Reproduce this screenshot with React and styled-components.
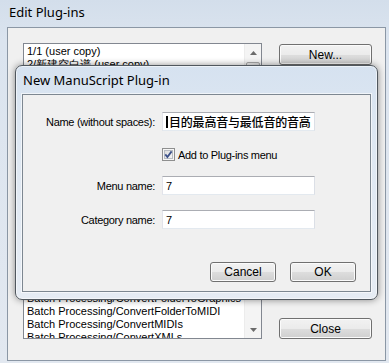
import React from "react";
import styled, { createGlobalStyle } from "styled-components";

const GlobalStyle = createGlobalStyle`
  html, body { margin: 0; padding: 0; }
  body {
    width: 389px;
    height: 363px;
    overflow: hidden;
    background: #dfe7f0;
    font-family: "Liberation Sans", Arial, sans-serif;
  }
`;

const Window = styled.div`
  position: relative;
  width: 389px;
  height: 363px;
  display: flex;
  flex-direction: column;
  background: linear-gradient(180deg, #d3deeb 0px, #dbe4ef 40px, #e2e8f0 100%);
  overflow: hidden;
`;

const TitleBar = styled.div`
  height: 27px;
  box-sizing: border-box;
  display: flex;
  align-items: center;
  padding: 0 0 3px 9px;
  font-family: "Noto Sans", "Open Sans", sans-serif;
  font-size: 13px;
  color: #000;
`;

const Client = styled.div`
  flex: 1;
  margin: 0 3px 2px 7px;
  background: #f0f0f0;
  border: 1px solid #8b97a5;
  padding: 15px 13px 0 15px;
  display: grid;
  grid-template-columns: 239px 93px;
  column-gap: 17px;
  align-content: start;
`;

const ListBox = styled.div`
  height: 296px;
  box-sizing: border-box;
  border: 1px solid #828790;
  background: #fff;
  display: flex;
`;

const Items = styled.div`
  flex: 1;
  overflow: hidden;
  padding-top: 1px;
`;

const Item = styled.div`
  height: 13px;
  line-height: 13px;
  padding-left: 3px;
  font-size: 11px;
  white-space: nowrap;
  color: #000;
`;

// rows that sit behind the dialog and are never seen
const HiddenRows = styled.div`
  height: ${(p) => p.$rows * 13}px;
`;

const ScrollBar = styled.div`
  width: 16px;
  display: flex;
  flex-direction: column;
  background: #f4f4f4;
  border-left: 1px solid #ececec;
`;

const ScrollArrow = styled.div`
  height: 17px;
  display: flex;
  align-items: center;
  justify-content: center;
`;

const Thumb = styled.div`
  height: 40px;
  margin: 1px 1px 0;
  border: 1px solid #a9a9a9;
  border-radius: 2px;
  background: linear-gradient(90deg, #f3f3f3, #e2e2e2);
`;

const Track = styled.div`
  flex: 1;
`;

const ButtonColumn = styled.div`
  height: 296px;
  display: flex;
  flex-direction: column;
  justify-content: space-between;
  padding-top: 1px;
  box-sizing: border-box;
`;

const Button = styled.button`
  width: ${(p) => p.$w || 93}px;
  height: ${(p) => p.$h || 21}px;
  padding: 0;
  border: 1px solid #707070;
  border-radius: 3px;
  background: linear-gradient(180deg, #f2f2f2 0%, #ebebeb 50%, #dddddd 51%, #cfcfcf 100%);
  box-shadow: inset 0 0 0 1px #fbfbfb;
  font-family: "Liberation Sans", Arial, sans-serif;
  font-size: 12px;
  color: #000;
`;

const Dialog = styled.div`
  position: absolute;
  left: 15px;
  top: 65px;
  width: 363px;
  height: 235px;
  box-sizing: border-box;
  border: 1px solid #50575e;
  border-radius: 7px;
  background: linear-gradient(180deg, #d6e2f0 0px, #dde7f2 60px, #e6ecf4 100%);
  box-shadow: 0 0 7px rgba(0, 0, 0, 0.45), inset 0 0 0 1px rgba(255, 255, 255, 0.55);
  display: flex;
  flex-direction: column;
`;

const DialogTitle = styled.div`
  height: 28px;
  display: flex;
  align-items: center;
  padding-left: 7px;
  font-family: "Noto Sans", "Open Sans", sans-serif;
  font-size: 13px;
  color: #000;
`;

const DialogClient = styled.div`
  flex: 1;
  margin: 0 6px 7px 6px;
  background: #f0f0f0;
  border: 1px solid #7d8791;
  box-shadow: 0 0 0 1px rgba(255, 255, 255, 0.6);
  padding-top: 17px;
`;

const Row = styled.div`
  display: grid;
  grid-template-columns: 132px 153px;
  column-gap: 7px;
  align-items: center;
  margin-top: ${(p) => p.$mt || 0}px;
`;

const Label = styled.label`
  text-align: right;
  font-size: 11px;
  letter-spacing: -0.3px;
  color: #000;
  white-space: nowrap;
`;

const TextBox = styled.div`
  width: 153px;
  min-width: 0;
  height: 19px;
  box-sizing: border-box;
  display: flex;
  align-items: center;
  padding-left: 3px;
  overflow: hidden;
  background: #fff;
  border: 1px solid;
  border-color: #abadb3 #dbdfe6 #e3e9ef #e2e3ea;
  font-family: "Liberation Sans", Arial, sans-serif;
  font-size: 11px;
  white-space: nowrap;
  color: #000;
`;

const CjkText = styled.span`
  font-family: "Noto Sans CJK SC", sans-serif;
  font-size: 12px;
  font-weight: 500;
  letter-spacing: -0.2px;
  line-height: 17px;
`;

const Caret = styled.span`
  display: inline-block;
  width: 2px;
  height: 12px;
  background: #000;
  margin-right: 1px;
  flex: none;
`;

const CheckLine = styled.div`
  grid-column: 2;
  display: flex;
  align-items: center;
  gap: 3px;
  height: 13px;
  font-size: 11px;
  letter-spacing: -0.3px;
`;

const ButtonRow = styled.div`
  display: flex;
  justify-content: flex-end;
  gap: 14px;
  padding-right: 14px;
  margin-top: 33px;
`;

const topItems = ["1/1 (user copy)", "2/新建空白谱 (user copy)"];
const bottomItems = [
  "Batch Processing/ConvertFolderToGraphics",
  "Batch Processing/ConvertFolderToMIDI",
  "Batch Processing/ConvertMIDIs",
  "Batch Processing/ConvertXMLs",
];

function Arrow({ down }) {
  return (
    <svg width="7" height="4" viewBox="0 0 7 4">
      <path d={down ? "M0 0 H7 L3.5 4 Z" : "M0 4 H7 L3.5 0 Z"} fill="#6b6b6b" />
    </svg>
  );
}

function CheckBox() {
  return (
    <svg width="13" height="13" viewBox="0 0 13 13">
      <defs>
        <linearGradient id="cbg" x1="0" y1="0" x2="1" y2="1">
          <stop offset="0" stopColor="#dcdcdc" />
          <stop offset="1" stopColor="#f6f6f6" />
        </linearGradient>
      </defs>
      <rect x="0.5" y="0.5" width="12" height="12" fill="#f6f6f6" stroke="#8e8f8f" />
      <rect x="2.5" y="2.5" width="8" height="8" fill="url(#cbg)" stroke="#b7bcc2" />
      <path d="M3.3 6.4 L5.4 9 L9.6 3.4" fill="none" stroke="#3c5189" strokeWidth="1.8" />
    </svg>
  );
}

export default function App() {
  return (
    <>
      <GlobalStyle />
      <Window>
        <TitleBar>Edit Plug-ins</TitleBar>
        <Client>
          <ListBox>
            <Items>
              {topItems.map((t) => (
                <Item key={t}>{t}</Item>
              ))}
              <HiddenRows $rows={17} />
              {bottomItems.map((t) => (
                <Item key={t}>{t}</Item>
              ))}
            </Items>
            <ScrollBar>
              <ScrollArrow>
                <Arrow />
              </ScrollArrow>
              <Thumb />
              <Track />
              <ScrollArrow>
                <Arrow down />
              </ScrollArrow>
            </ScrollBar>
          </ListBox>
          <ButtonColumn>
            <Button>New...</Button>
            <Button>Close</Button>
          </ButtonColumn>
        </Client>

        <Dialog>
          <DialogTitle>New ManuScript Plug-in</DialogTitle>
          <DialogClient>
            <Row>
              <Label>Name (without spaces):</Label>
              <TextBox>
                <Caret />
                <CjkText>目的最高音与最低音的音高</CjkText>
              </TextBox>
            </Row>
            <Row $mt={17}>
              <CheckLine>
                <CheckBox />
                <span>Add to Plug-ins menu</span>
              </CheckLine>
            </Row>
            <Row $mt={15}>
              <Label>Menu name:</Label>
              <TextBox>7</TextBox>
            </Row>
            <Row $mt={15}>
              <Label>Category name:</Label>
              <TextBox>7</TextBox>
            </Row>
            <ButtonRow>
              <Button $w={66} $h={20}>Cancel</Button>
              <Button $w={66} $h={20}>OK</Button>
            </ButtonRow>
          </DialogClient>
        </Dialog>
      </Window>
    </>
  );
}
